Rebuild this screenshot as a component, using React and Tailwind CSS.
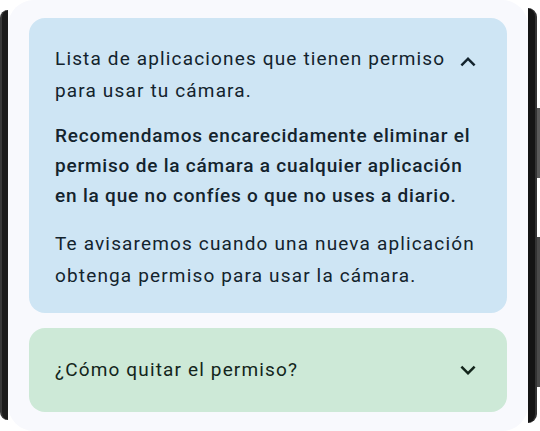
const font = { fontFamily: "Roboto, 'Noto Sans', sans-serif" };

const Chevron = ({ up }) => (
  <svg width="30" height="30" viewBox="0 0 24 24" className="shrink-0" fill="currentColor">
    {up ? (
      <path d="M7.41 15.41L12 10.83l4.59 4.58L18 14l-6-6-6 6z" />
    ) : (
      <path d="M7.41 8.59L12 13.17l4.59-4.58L18 10l-6 6-6-6z" />
    )}
  </svg>
);

const App = () => {
  return (
    <div className="w-[540px] h-[431px] bg-white flex overflow-hidden" style={font}>
      {/* left edge of the device */}
      <div className="w-[8px] mt-[10px] mb-[11px] bg-[#1c1c1c] rounded-l-[14px] border-l-2 border-[#3a3a3a]" />

      {/* screen */}
      <div className="flex-1 bg-[#f8f9fd] rounded-[26px] px-[21px] pt-[18px] flex flex-col gap-[15px]">
        <div className="bg-[#cee5f4] rounded-[16px] h-[295px] pl-[26px] pr-[26px] pt-[25px] text-[#13232d]">
          <div className="flex items-start">
            <p className="text-[19px] leading-[32px] tracking-[1.15px] w-[402px] shrink-0">
              Lista de aplicaciones que tienen permiso para usar tu cámara.
            </p>
            <div className="mt-[4px] w-[26px] -mr-[2px] flex justify-end">
              <Chevron up />
            </div>
          </div>
          <p className="mt-[14px] text-[19px] leading-[30px] font-medium tracking-[0.8px]">
            Recomendamos encarecidamente eliminar el permiso de la cámara a cualquier aplicación en la que no confíes o que no uses a diario.
          </p>
          <p className="mt-[17px] text-[19px] leading-[32px] tracking-[1.15px]">
            Te avisaremos cuando una nueva aplicación obtenga permiso para usar la cámara.
          </p>
        </div>

        <div className="bg-[#cde9d7] rounded-[16px] h-[84px] pl-[26px] pr-[24px] flex items-center justify-between text-[#13251b]">
          <p className="text-[19px] leading-[32px] tracking-[1.15px]">¿Cómo quitar el permiso?</p>
          <Chevron />
        </div>
      </div>

      {/* right edge of the device with side buttons */}
      <div className="flex">
        <div className="w-[9px] mt-[8px] mb-[8px] bg-[#141414] rounded-r-[12px] border-r-2 border-[#333]" />
        <div className="w-[3px] flex flex-col">
          <div className="h-[108px]" />
          <div className="h-[70px] bg-[#5a5a5a]" />
          <div className="h-[59px]" />
          <div className="h-[150px] bg-[#4a4a4a]" />
        </div>
      </div>
    </div>
  );
};

export default App;
